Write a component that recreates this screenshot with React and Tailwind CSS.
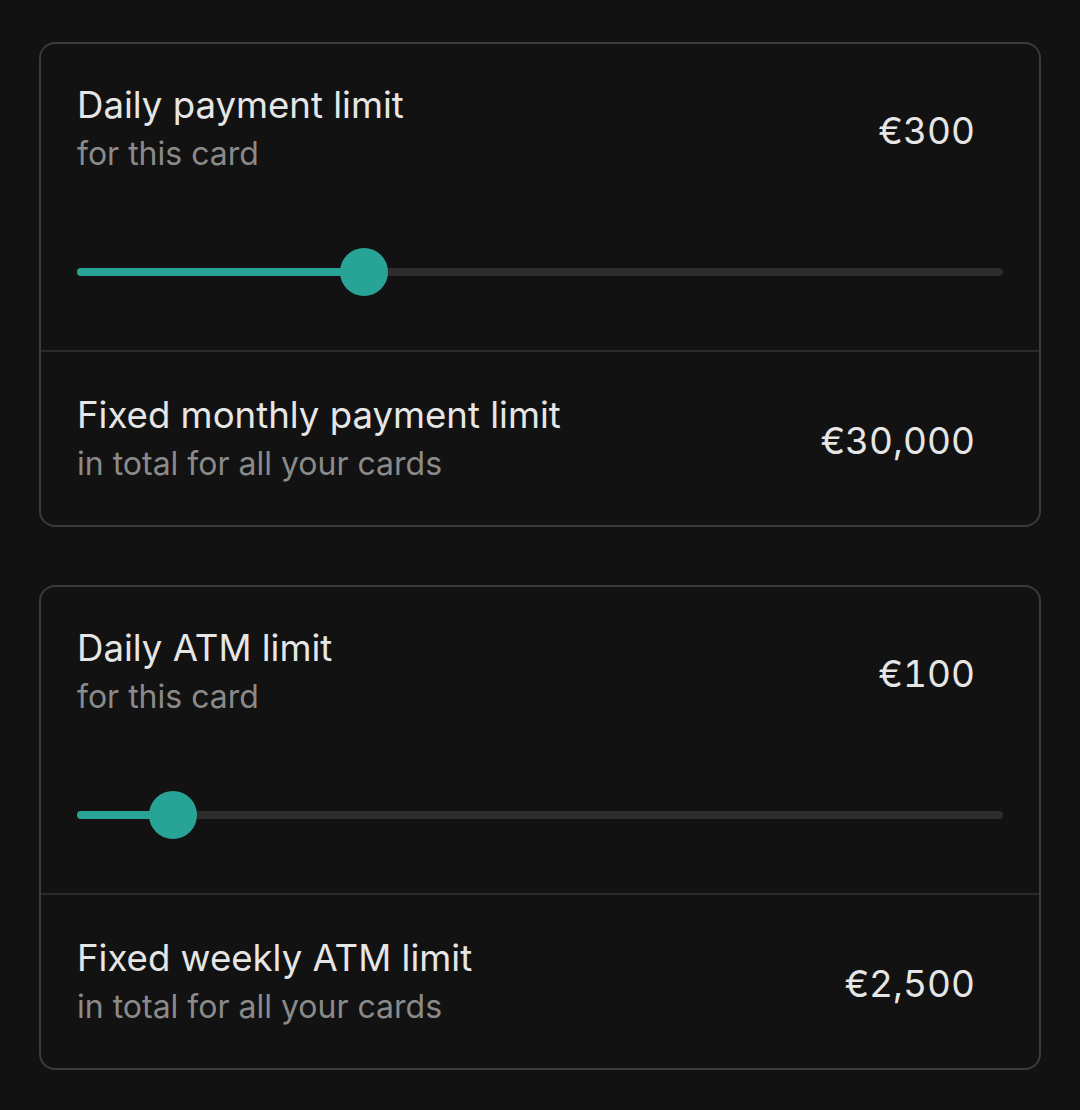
const limits = [
  {
    title: "Daily payment limit",
    sub: "for this card",
    value: "€300",
    pct: 31,
    fixedTitle: "Fixed monthly payment limit",
    fixedSub: "in total for all your cards",
    fixedValue: "€30,000",
  },
  {
    title: "Daily ATM limit",
    sub: "for this card",
    value: "€100",
    pct: 10.4,
    fixedTitle: "Fixed weekly ATM limit",
    fixedSub: "in total for all your cards",
    fixedValue: "€2,500",
  },
];

function Slider({ pct }) {
  return (
    <div className="relative h-12">
      <div className="absolute left-0 right-0 top-1/2 h-[8px] -translate-y-1/2 rounded-full bg-[#2c2c2c]" />
      <div
        className="absolute left-0 top-1/2 h-[8px] -translate-y-1/2 rounded-full bg-[#28a497]"
        style={{ width: `${pct}%` }}
      />
      <div
        className="absolute top-0 h-12 w-12 -translate-x-1/2 rounded-full bg-[#28a497]"
        style={{ left: `${pct}%` }}
      />
    </div>
  );
}

function Row({ title, sub, value }) {
  return (
    <div className="flex items-center justify-between">
      <div className="flex flex-col">
        <span className="text-[36.6px] leading-[46px] text-[#e6e6e6]">{title}</span>
        <span className="text-[32px] leading-[52px] text-[#8a8a8a]">{sub}</span>
      </div>
      <span className="pr-[28px] text-[37px] leading-[46px] tabular-nums text-[#e6e6e6]">{value}</span>
    </div>
  );
}

function LimitCard({ item }) {
  return (
    <div className="rounded-[16px] border-2 border-[#3a3a3a]">
      <div className="px-[36px] pt-[38px] pb-[54px]">
        <Row title={item.title} sub={item.sub} value={item.value} />
        <div className="mt-[68px]">
          <Slider pct={item.pct} />
        </div>
      </div>
      <div className="border-t-2 border-[#2a2a2a] px-[36px] pt-[40px] pb-[35px]">
        <Row title={item.fixedTitle} sub={item.fixedSub} value={item.fixedValue} />
      </div>
    </div>
  );
}

export default function App() {
  return (
    <div
      className="min-h-[1110px] bg-[#121212] px-[39px] pt-[42px]"
      style={{ fontFamily: "Inter, 'Noto Sans', sans-serif" }}
    >
      <div className="flex flex-col gap-[58px]">
        {limits.map((item) => (
          <LimitCard key={item.title} item={item} />
        ))}
      </div>
    </div>
  );
}
